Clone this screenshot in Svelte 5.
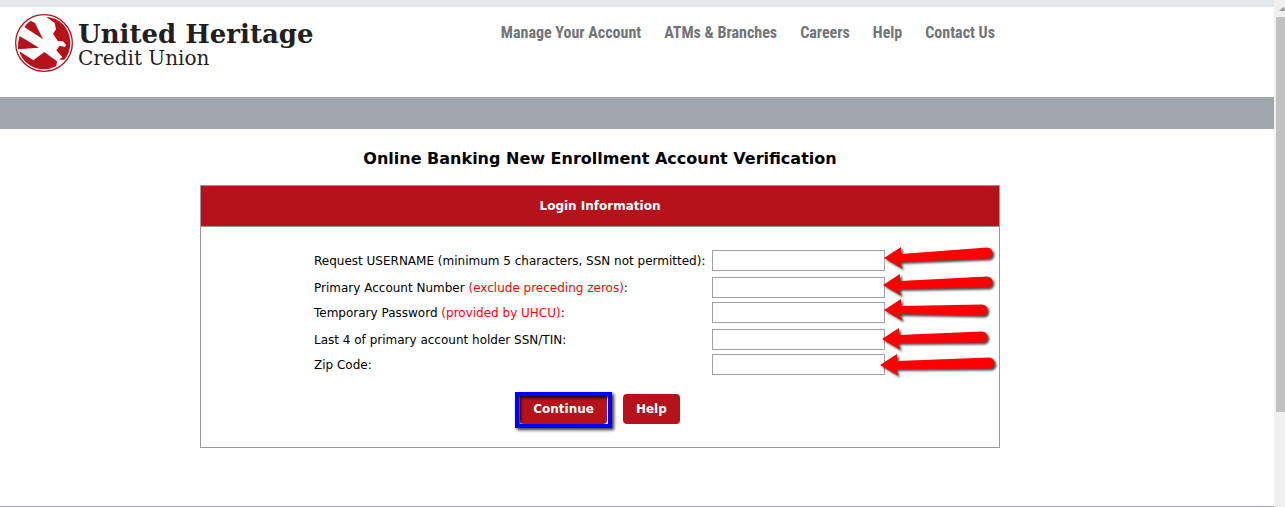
<script>
const navLinks = ['Manage Your Account', 'ATMs & Branches', 'Careers', 'Help', 'Contact Us'];

let fields = $state([
    { id: 'username', label: 'Request USERNAME (minimum 5 characters, SSN not permitted)', note: '', type: 'text', value: '' },
    { id: 'account', label: 'Primary Account Number', note: '(exclude preceding zeros)', type: 'text', value: '' },
    { id: 'password', label: 'Temporary Password', note: '(provided by UHCU)', type: 'password', value: '' },
    { id: 'ssn', label: 'Last 4 of primary account holder SSN/TIN', note: '', type: 'text', value: '' },
    { id: 'zip', label: 'Zip Code', note: '', type: 'text', value: '' }
]);

// tip of each arrow and the middle of its rounded end
const arrows = [
    { x: 4, y: 18, endX: 107, endY: 13 },
    { x: 3, y: 45, endX: 107, endY: 42 },
    { x: 4, y: 70, endX: 102, endY: 70 },
    { x: 2, y: 99, endX: 102, endY: 97 },
    { x: 0, y: 125, endX: 109, endY: 123 }
];

function arrowPath({ x, y, endX, endY }) {
    return `M${x} ${y} L${x + 17} ${y - 11} V${y - 4} L${endX} ${endY - 5.5}
        A5.5 5.5 0 0 1 ${endX} ${endY + 5.5} L${x + 16} ${y + 4} L${x + 18} ${y + 10.5} Z`;
}
</script>

<div class="window">
    <div class="page">
        <header>
            <a class="logo" href="#home">
                <svg viewBox="0 0 174 174" width="58" height="58" aria-hidden="true">
                    <circle cx="87" cy="87" r="85" fill="#fff" stroke="#b5121b" stroke-width="4" />
                    <g fill="#b5121b">
                        <path d="M28 39 Q36 28 47 20 L60 27 L84 76 Z" />
                        <path d="M14 66 L72 101 L9 106 Q7 84 14 66 Z" />
                        <path d="M13 112 L55 139 L88 114 L126 142 L124 157 Q104 166 87 166 C51 166 21 143 13 112 Z" />
                        <path d="M94 9 C136 11 166 45 166 87 Q165 118 148 137 L132 137 L142 130 L124 109 L134 95 L150 99 L153 93 L144 82 L129 82 L114 59 L123 46 L119 27 Z" />
                    </g>
                </svg>
                <span class="wordmark">
                    <strong>United Heritage</strong>
                    <span>Credit Union</span>
                </span>
            </a>
            <nav>
                {#each navLinks as link (link)}
                <a href="#{link}">{link}</a>
                {/each}
            </nav>
        </header>
        <div class="band"></div>
        <main>
            <h1>Online Banking New Enrollment Account Verification</h1>
            <form onsubmit={(e) => e.preventDefault()}>
                <h2>Login Information</h2>
                <div class="fields">
                    {#each fields as field (field.id)}
                    <div class="row">
                        <label for={field.id}>{field.label}{#if field.note}&nbsp;<span class="note">{field.note}</span>{/if}:</label>
                        <input id={field.id} type={field.type} bind:value={field.value} />
                    </div>
                    {/each}
                    <svg class="arrows" viewBox="0 0 125 145" width="125" height="145" aria-hidden="true">
                        {#each arrows as arrow}
                        <path d={arrowPath(arrow)} />
                        {/each}
                    </svg>
                </div>
                <div class="buttons">
                    <div class="marked">
                        <button type="submit">Continue</button>
                    </div>
                    <button type="button">Help</button>
                </div>
            </form>
        </main>
    </div>
    <div class="scrollbar">
        <svg viewBox="0 0 9 17" width="9" height="17" aria-hidden="true">
            <path d="M3 11 L7 7 L11 11 Z" fill="#a3a3a3" />
        </svg>
        <div class="thumb"></div>
    </div>
</div>

<style>
:global(body) {
    margin: 0;
    background: #fff;
}

.window {
    display: flex;
    min-height: 100vh;
    font-family: "DejaVu Sans", Verdana, sans-serif;
    font-size: 12px;
    color: #000;
}

.page {
    flex: 1;
    box-sizing: border-box;
    border-top: 7px solid #e4e8eb;
    border-bottom: 1px solid #9fa6ad;
}

header {
    display: flex;
    justify-content: space-between;
    box-sizing: border-box;
    height: 90px;
    max-width: 995px;
    padding: 7px 0 0 15px;
}

.logo {
    display: flex;
    gap: 5px;
    height: 58px;
    color: #231f20;
    text-decoration: none;
}

.wordmark {
    display: flex;
    flex-direction: column;
    padding-top: 6px;
    font-family: "DejaVu Serif", serif;
    font-size: 20px;
    line-height: 20px;
    white-space: nowrap;
}

.wordmark strong {
    font-size: 26px;
    line-height: 28px;
}

nav {
    display: flex;
    gap: 23px;
    padding-top: 8px;
    font-family: "Liberation Sans Narrow", "Roboto Condensed", sans-serif;
    font-size: 16px;
    font-weight: bold;
    line-height: 22px;
    white-space: nowrap;
}

nav a {
    color: #737477;
    text-decoration: none;
}

.band {
    height: 32px;
    background: #9fa6ad;
}

main {
    max-width: 800px;
    padding: 18px 0 58px 200px;
}

h1 {
    margin: 0 0 14px;
    font-size: 16px;
    line-height: 24px;
    text-align: center;
}

form {
    border: 1px solid #999;
}

h2 {
    margin: 0;
    border-bottom: 1px solid #999;
    background: #b5121b;
    color: #fff;
    font-size: 12px;
    line-height: 40px;
    text-align: center;
}

.fields {
    position: relative;
    margin: 23px 114px 0 113px;
}

.row {
    display: flex;
    justify-content: space-between;
    align-items: center;
    margin-top: 4px;
}

.row:nth-child(even) {
    margin-top: 6px;
}

.row:first-child {
    margin-top: 0;
}

label {
    line-height: 20px;
    white-space: nowrap;
}

.note {
    color: #f00;
}

input {
    box-sizing: border-box;
    width: 173px;
    height: 21px;
    padding: 1px 3px;
    border: 1px solid #a0a0a0;
    background: #fff;
    font: inherit;
}

.arrows {
    position: absolute;
    top: -10px;
    left: 566px;
    overflow: visible;
    pointer-events: none;
    fill: #f00;
    filter: drop-shadow(2px 2px 1px rgba(0, 0, 0, 0.7));
}

.buttons {
    display: flex;
    justify-content: center;
    gap: 16px;
    padding: 19px 0 23px;
}

.marked {
    position: relative;
}

.marked::after {
    content: "";
    position: absolute;
    inset: -2px -5px -4px;
    border: 4px solid #00f;
    box-shadow: 2px 2px 3px rgba(0, 0, 0, 0.8), inset 2px 2px 3px rgba(0, 0, 0, 0.8);
    pointer-events: none;
}

button {
    display: block;
    height: 30px;
    padding: 0 13px;
    border: 0;
    border-radius: 4px;
    background: #b5121b;
    color: #fff;
    font: bold 12px "DejaVu Sans", Verdana, sans-serif;
    cursor: pointer;
}

.scrollbar {
    display: flex;
    flex-direction: column;
    align-items: flex-end;
    width: 11px;
    background: #f0f0f0;
}

.scrollbar svg {
    flex: none;
}

.thumb {
    width: 9px;
    height: 78%;
    background: #c1c1c1;
}
</style>
